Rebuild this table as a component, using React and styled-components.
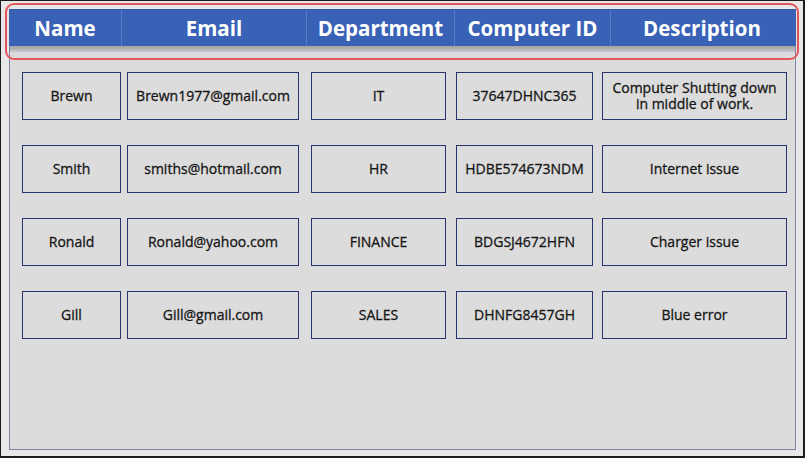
import React from 'react';
import styled, { createGlobalStyle } from 'styled-components';

const GlobalStyle = createGlobalStyle`
  html, body {
    margin: 0;
    padding: 0;
    background: #e6e6e6;
  }
  * {
    box-sizing: border-box;
  }
`;

const columns = [
  { title: 'Name', head: 112, track: 105, cell: 99 },
  { title: 'Email', head: 185, track: 184, cell: 172 },
  { title: 'Department', head: 148, track: 145, cell: 135 },
  { title: 'Computer ID', head: 156, track: 146, cell: 137 },
  { title: 'Description', head: 183, track: 185, cell: 185 },
];

const records = [
  ['Brewn', 'Brewn1977@gmail.com', 'IT', '37647DHNC365', 'Computer Shutting down in middle of work.'],
  ['Smith', 'smiths@hotmail.com', 'HR', 'HDBE574673NDM', 'Internet issue'],
  ['Ronald', 'Ronald@yahoo.com', 'FINANCE', 'BDGSJ4672HFN', 'Charger issue'],
  ['Gill', 'Gill@gmail.com', 'SALES', 'DHNFG8457GH', 'Blue error'],
];

function App() {
  return (
    <>
      <GlobalStyle />
      <Frame>
        <Panel>
          <Header>
            {columns.map((col) => (
              <HeadCell key={col.title}>{col.title}</HeadCell>
            ))}
          </Header>
          <HeaderShadow />
          <Rows>
            {records.map((row) => (
              <Row key={row[0]}>
                {row.map((value, i) => (
                  <Cell key={i} $w={columns[i].cell}>
                    {value}
                  </Cell>
                ))}
              </Row>
            ))}
          </Rows>
        </Panel>
        <Highlight />
      </Frame>
    </>
  );
}

const Frame = styled.div`
  position: relative;
  width: 805px;
  height: 458px;
  border: 1px solid #1c1c1c;
  border-bottom-width: 2px;
  border-right-width: 2px;
  background: #e7e7e7;
  padding: 8px 7px 6px 8px;
  font-family: 'Open Sans', 'Noto Sans', sans-serif;
`;

const Panel = styled.div`
  width: 787px;
  height: 441px;
  background: #dcdcdc;
  border: 1px solid #7f84a6;
  border-top: none;
  display: flex;
  flex-direction: column;
`;

const Header = styled.div`
  display: grid;
  grid-template-columns: ${columns.map((c) => c.head + 'px').join(' ')};
  height: 37px;
  margin: 0 -1px;
  background: #3961b6;
  border-top: 1px solid #3458a6;
`;

const HeadCell = styled.div`
  display: flex;
  align-items: center;
  justify-content: center;
  color: #ffffff;
  font-size: 20.5px;
  font-weight: 700;
  border-left: 1px solid #5a7cc4;
  &:first-child {
    border-left: none;
  }
`;

const HeaderShadow = styled.div`
  height: 6px;
  background: linear-gradient(#a4a4a4, #b4b4b4 70%, #c8c8c8);
  border-bottom: 1px solid #c0c3d6;
`;

const Rows = styled.div`
  display: flex;
  flex-direction: column;
  gap: 25px;
  padding: 20px 0 0 12px;
`;

const Row = styled.div`
  display: grid;
  grid-template-columns: ${columns.map((c) => c.track + 'px').join(' ')};
  height: 48px;
`;

const Cell = styled.div`
  width: ${(p) => p.$w}px;
  height: 48px;
  display: flex;
  align-items: center;
  justify-content: center;
  text-align: center;
  padding: 0 6px;
  border: 1px solid #29346f;
  background: #dcdcdc;
  color: #161616;
  font-size: 14px;
  line-height: 16px;
  -webkit-text-stroke: 0.3px #161616;
`;

const Highlight = styled.div`
  position: absolute;
  left: 4px;
  top: 2px;
  width: 794px;
  height: 57px;
  border: 2px solid #e2565a;
  border-radius: 9px;
  pointer-events: none;
`;

export default App;
